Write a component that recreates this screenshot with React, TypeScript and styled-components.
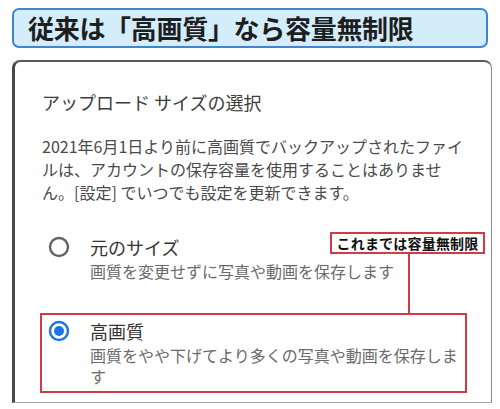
import React from 'react';
import styled, { createGlobalStyle } from 'styled-components';

const COLOR_RED = '#d33a48';
const COLOR_BLUE = '#1a73e8';
const COLOR_GRAY = '#5f6368';

const GlobalStyle = createGlobalStyle`
  html, body {
    margin: 0;
    padding: 0;
    background: #ffffff;
  }
  body {
    font-family: "Noto Sans CJK JP", "Noto Sans", sans-serif;
    color: #333;
  }
`;

const Page = styled.div`
  width: 500px;
  height: 409px;
  padding: 8px 0 0 12px;
  box-sizing: border-box;
  overflow: hidden;
`;

const TitleBox = styled.div`
  width: 476px;
  height: 40px;
  box-sizing: border-box;
  border: 2px solid #3f86cf;
  border-radius: 7px;
  background: #d3edfb;
  display: flex;
  align-items: center;
  padding-left: 14px;
`;

const Title = styled.h1`
  margin: 0;
  font-size: 26px;
  font-weight: 700;
  line-height: 1;
  color: #1e1e1e;
  letter-spacing: -0.3px;
`;

const Card = styled.div`
  position: relative;
  margin-top: 12px;
  width: 480px;
  height: 343px;
  box-sizing: border-box;
  border-left: 3px solid #474747;
  border-top: 2px solid #5a5a5a;
  border-right: 1.5px solid #8a8a8a;
  border-bottom: 1px solid #a8a8a8;
  border-radius: 8px 8px 0 0;
  padding: 28px 12px 0 27px;
  background: #fff;
`;

const Heading = styled.h2`
  margin: 0;
  font-size: 18px;
  font-weight: 400;
  line-height: 24px;
  color: #3c3c3c;
`;

const Description = styled.p`
  margin: 21px 0 0;
  font-size: 16px;
  line-height: 23px;
  color: #4a4a4a;
  white-space: nowrap;
`;

const Options = styled.div`
  display: flex;
  flex-direction: column;
  gap: 37px;
  margin-top: 31px;
`;

const Option = styled.label`
  display: flex;
  align-items: flex-start;
  gap: 20px;
  padding-left: 6px;
`;

const RadioMark = styled.svg`
  flex: none;
  width: 22px;
  height: 22px;
  margin-top: 1px;
`;

const OptionText = styled.div`
  width: 376px;
`;

const OptionLabel = styled.div`
  font-size: 18px;
  line-height: 24px;
  color: #333;
`;

const OptionSub = styled.div`
  margin-top: 2px;
  font-size: 16px;
  line-height: 21px;
  color: #6a6a6a;
`;

const Highlight = styled.div`
  position: absolute;
  left: 25px;
  top: 251px;
  width: 427px;
  height: 80px;
  box-sizing: border-box;
  border: 2px solid ${COLOR_RED};
  pointer-events: none;
`;

const Callout = styled.div`
  position: absolute;
  left: 315px;
  top: 170px;
  width: 155px;
  height: 22px;
  box-sizing: border-box;
  border: 2px solid ${COLOR_RED};
  background: #fff;
  display: flex;
  align-items: center;
  justify-content: center;
  font-size: 14px;
  font-weight: 700;
  color: #111;
  letter-spacing: 0.2px;
`;

const Connector = styled.div`
  position: absolute;
  left: 393px;
  top: 191px;
  width: 2px;
  height: 61px;
  background: ${COLOR_RED};
`;

const Radio: React.FC<{ checked?: boolean }> = ({ checked }) => (
  <RadioMark viewBox="0 0 22 22">
    <circle
      cx="11"
      cy="11"
      r="9"
      fill="none"
      stroke={checked ? COLOR_BLUE : COLOR_GRAY}
      strokeWidth="2.4"
    />
    {checked && <circle cx="11" cy="11" r="5" fill={COLOR_BLUE} />}
  </RadioMark>
);

export default function App() {
  return (
    <>
      <GlobalStyle />
      <Page>
        <TitleBox>
          <Title>従来は「高画質」なら容量無制限</Title>
        </TitleBox>
        <Card>
          <Heading>アップロード サイズの選択</Heading>
          <Description>
            2021年6月1日より前に高画質でバックアップされたファイ
            <br />
            ルは、アカウントの保存容量を使用することはありませ
            <br />
            ん。[設定] でいつでも設定を更新できます。
          </Description>
          <Options>
            <Option>
              <Radio />
              <OptionText>
                <OptionLabel>元のサイズ</OptionLabel>
                <OptionSub>画質を変更せずに写真や動画を保存します</OptionSub>
              </OptionText>
            </Option>
            <Option>
              <Radio checked />
              <OptionText>
                <OptionLabel>高画質</OptionLabel>
                <OptionSub>画質をやや下げてより多くの写真や動画を保存します</OptionSub>
              </OptionText>
            </Option>
          </Options>
          <Highlight />
          <Connector />
          <Callout>これまでは容量無制限</Callout>
        </Card>
      </Page>
    </>
  );
}
